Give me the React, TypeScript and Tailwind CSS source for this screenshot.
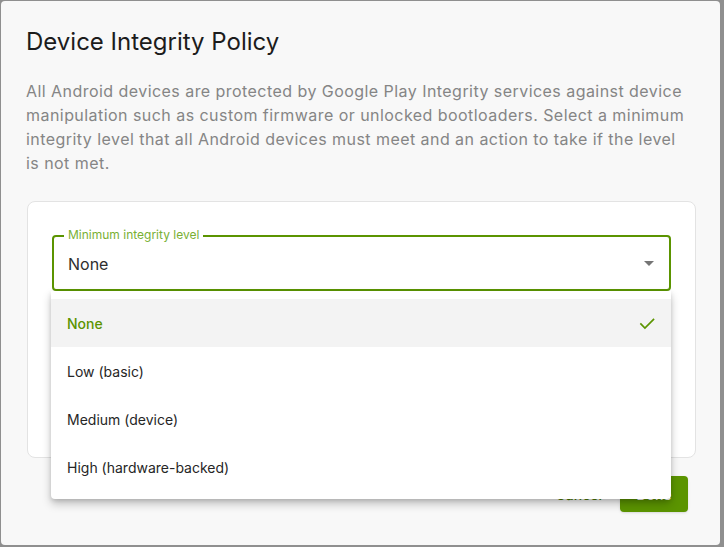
import React from "react";

const items = ["None", "Low (basic)", "Medium (device)", "High (hardware-backed)"];

export default function App() {
  return (
    <div className="w-[724px] h-[547px] bg-[#8f8f8f] p-px overflow-hidden" style={{ fontFamily: "Inter, 'Noto Sans', sans-serif" }}>
      <div className="relative w-[719px] h-[544px] bg-[#f8f8f8] rounded-[4px] flex flex-col pl-[25px] pr-[26px] pt-[25px]">
        <h1 className="text-[24px] leading-[32px] text-[#1c1c1c] font-normal">Device Integrity Policy</h1>
        <p className="mt-[21px] text-[16px] leading-[24px] tracking-[0.45px] text-[#858585] w-[664px]">
          All Android devices are protected by Google Play Integrity services against device manipulation such as custom firmware or unlocked bootloaders. Select a minimum integrity level that all Android devices must meet and an action to take if the level is not met.
        </p>
        <div className="mt-[26px] ml-px w-[669px] h-[257px] bg-white border border-[#e3e3e3] rounded-[8px] px-[24px] pt-[33px]">
          <div className="relative h-[56px] border-2 border-[#5b9400] rounded-[4px] flex items-center pl-[14px] pr-[14px]">
            <span className="absolute -top-[9px] left-[10px] bg-white px-[4px] text-[12px] leading-[14px] text-[#79b034]">Minimum integrity level</span>
            <span className="text-[16px] text-[#2e2e2e] flex-1 mt-[1px]">None</span>
            <svg width="10" height="5" viewBox="0 0 10 5" className="mr-[1px]">
              <path d="M0 0 L10 0 L5 5 Z" fill="#757575" />
            </svg>
          </div>
        </div>
        <div className="flex justify-end items-center mt-[18px] mr-[6px] gap-[16px]">
          <span className="text-[14px] font-medium text-[#4d7d00] px-[2px]">Cancel</span>
          <div className="w-[68px] h-[36px] bg-[#5b9400] rounded-[4px] flex items-center justify-center text-[14px] font-medium text-white shadow-sm">Done</div>
        </div>
        <div className="absolute left-[50px] top-[290px] w-[620px] bg-white py-[8px] rounded-b-[4px] shadow-[0_5px_10px_rgba(0,0,0,0.22),0_2px_4px_rgba(0,0,0,0.12)]">
          {items.map((it, i) => (
            <div key={it} className={`h-[48px] flex items-center pl-[16px] pr-[14px] text-[14px] ${i === 0 ? "bg-[#f3f3f3] text-[#5b9400] font-medium" : "text-[#262626]"}`}>
              <span className="flex-1">{it}</span>
              {i === 0 && (
                <svg width="20" height="20" viewBox="0 0 24 24">
                  <path d="M4 12.5 L9.5 18 L20.5 7" fill="none" stroke="#5b9400" strokeWidth="2" />
                </svg>
              )}
            </div>
          ))}
        </div>
      </div>
    </div>
  );
}
